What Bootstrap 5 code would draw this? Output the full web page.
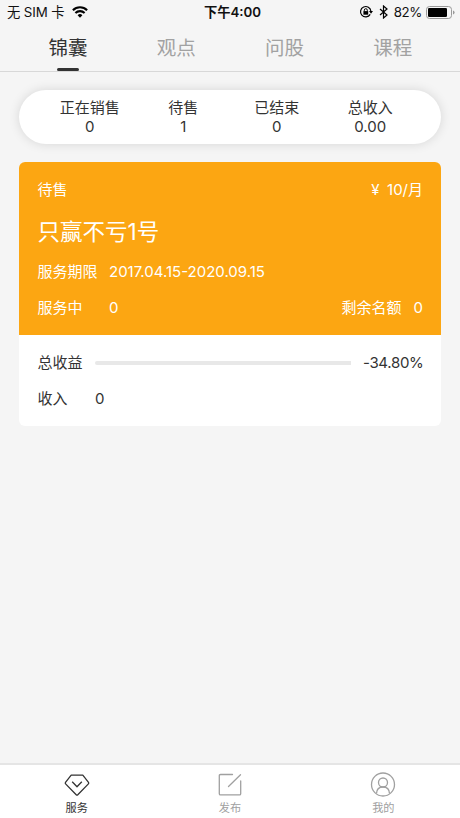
<!DOCTYPE html>
<html lang="zh-CN">
<head>
<meta charset="utf-8">
<meta name="viewport" content="width=device-width, initial-scale=1">
<title>锦囊</title>
<link href="https://cdn.jsdelivr.net/npm/bootstrap@5.3.0/dist/css/bootstrap.min.css" rel="stylesheet">
<style>
body{font-family:Inter,"Noto Sans CJK SC",sans-serif;font-size:15px;line-height:20px;font-weight:370;color:#333;background:#f5f5f5;height:818px;overflow:hidden}
svg{display:block;flex:none}
.status-bar{height:24px;padding:0 5px 0 7px;font-size:13.3px;color:#111;font-weight:400}
.status-bar>div{flex:1 1 0}
.carrier{letter-spacing:-.1px}
.wifi{margin-left:7px}
.clock{font-weight:600;font-size:13.3px;padding-left:3px}
.percent{letter-spacing:-.35px}
.top-tabs{height:48px;padding:0 13px 0 14px;border-bottom:1px solid #d8d8d8}
.top-tabs a{flex:1;color:#a2a2a2;font-size:19.5px;line-height:48px;text-decoration:none;text-align:center}
.top-tabs a.active{color:#333}
.top-tabs a.active::after{content:"";display:block;width:22px;height:3px;border-radius:2px;background:#333;margin:-4px auto 0}
.stats{margin:18px 19px 0;height:54px;border-radius:27px;padding:8px 24px 0;background:#fff;box-shadow:0 0 11px rgba(0,0,0,.13);line-height:19px}
.plan{margin:18px 19px 0;border-radius:6px;overflow:hidden;background:#fff}
.plan-head{background:#fca612;color:#fff;height:173px;padding:18px 18px 0 18.5px}
.plan-title{font-size:22.5px;line-height:30px;margin-top:17px}
.period{margin-top:15px}
.quota,.income{margin-top:16px}
.plan-body{height:91px;padding:18px 17.5px 0 18.5px}
.left-count,.rate{margin-left:12px}
.rate{letter-spacing:-.3px}
.key{width:71.5px}
.key-sm{width:57.5px}
.gauge{height:4px;border-radius:2px 0 0 2px;background:#e8e8e8}
.tabbar{height:55px;border-top:2px solid #e5e5e5;background:#fff}
.tabbar a{flex:1;color:#a0a0a0;font-size:11.2px;line-height:16px;text-decoration:none;padding-top:7px}
.tabbar a.active{color:#333}
.tabbar svg{margin-bottom:2px}
</style>
</head>
<body class="d-flex flex-column">
<header>
  <div class="status-bar d-flex align-items-center">
    <div class="d-flex align-items-center"><span class="carrier">无 SIM 卡</span>
      <svg class="wifi" width="16" height="12" viewBox="0 0 16 12" fill="none" stroke="#000" stroke-width="2.1"><path d="M.9 4.2a10 10 0 0 1 14.2 0M3.4 7a6.5 6.5 0 0 1 9.2 0"/><path d="M5.6 9.2a3.4 3.4 0 0 1 4.8 0L8 11.8z" fill="#000" stroke="none"/></svg>
    </div>
    <span class="clock">下午4:00</span>
    <div class="d-flex align-items-center justify-content-end">
      <svg width="14" height="14" viewBox="0 0 14 14" fill="none" stroke="#000"><path d="M11.2 9.4A5.2 5.2 0 1 1 11.9 6.2" stroke-width="1.2"/><path d="M10 6h4l-2 2.8z" fill="#000" stroke="none"/><path d="M4.4 6.1h4.8v3.6H4.4z" fill="#000" stroke="none"/><path d="M5.3 6.3V5.2a1.5 1.5 0 0 1 3 0v1.1"/></svg>
      <svg class="ms-1" width="13" height="14" viewBox="-2 0 13 14" fill="none" stroke="#000" stroke-width="1.2"><path d="M1 4l7 6-3.5 3V1L8 4l-7 6"/></svg>
      <span class="ms-1 percent">82%</span>
      <svg class="ms-1" width="29" height="13" viewBox="0 0 29 13"><rect x=".5" y=".5" width="25" height="12" rx="3" fill="none" stroke="#999"/><rect x="2" y="2" width="19" height="9" rx="1.3"/><path d="M27 4.5v4q1.6-.5 1.6-2t-1.6-2z" fill="#999"/></svg>
    </div>
  </div>
  <nav class="top-tabs d-flex"><a class="active" href="#">锦囊</a><a href="#">观点</a><a href="#">问股</a><a href="#">课程</a></nav>
</header>
<main class="flex-grow-1">
  <section class="stats d-flex text-center">
    <div class="flex-fill w-25">正在销售<br>0</div><div class="flex-fill w-25">待售<br>1</div><div class="flex-fill w-25">已结束<br>0</div><div class="flex-fill w-25">总收入<br>0.00</div>
  </section>
  <article class="plan">
    <div class="plan-head">
      <div class="d-flex justify-content-between"><span>待售</span><span>¥&ensp;10/月</span></div>
      <div class="plan-title">只赢不亏1号</div>
      <div class="d-flex period"><span class="key">服务期限</span><span>2017.04.15-2020.09.15</span></div>
      <div class="d-flex quota"><span class="key">服务中</span><span>0</span><span class="ms-auto">剩余名额</span><span class="left-count">0</span></div>
    </div>
    <div class="plan-body">
      <div class="d-flex align-items-center"><span class="key-sm">总收益</span><div class="gauge flex-grow-1"></div><span class="rate">-34.80%</span></div>
      <div class="d-flex income"><span class="key-sm">收入</span><span>0</span></div>
    </div>
  </article>
</main>
<nav class="tabbar d-flex">
  <a class="active d-flex flex-column align-items-center" href="#"><svg width="26" height="26" viewBox="0 0 26 26" fill="none" stroke="#333" stroke-width="1.3" stroke-linejoin="round"><path d="M7.2 3.2h11.6l5.7 7.2c.4.6.4 1-.1 1.5L13.8 22.7q-.8.8-1.6 0L1.6 11.9c-.5-.5-.5-.9-.1-1.5z"/><path d="M8.2 9.7l4.8 5 4.8-5"/></svg>服务</a>
  <a class="d-flex flex-column align-items-center" href="#"><svg width="26" height="26" viewBox="0 0 26 26" fill="none" stroke="#a0a0a0" stroke-width="1.3" stroke-linecap="round"><path d="M15.5 2.500H3.500q-1.200 0-1.200 1.200v18q0 1.200 1.200 1.200h19q1.200 0 1.200-1.200V9M23.500 2.700L11.500 14.500"/></svg>发布</a>
  <a class="d-flex flex-column align-items-center" href="#"><svg width="26" height="26" viewBox="0 0 26 26" fill="none" stroke="#a0a0a0" stroke-width="1.3"><circle cx="13" cy="12.500" r="11.500"/><circle cx="13" cy="10.500" r="4.500"/><path d="M6.500 21.500c.2-4 2.800-6.500 6.500-6.500s6.300 2.500 6.500 6.500"/></svg>我的</a>
</nav>
<script src="https://cdn.jsdelivr.net/npm/bootstrap@5.3.0/dist/js/bootstrap.bundle.min.js"></script>
</body>
</html>
